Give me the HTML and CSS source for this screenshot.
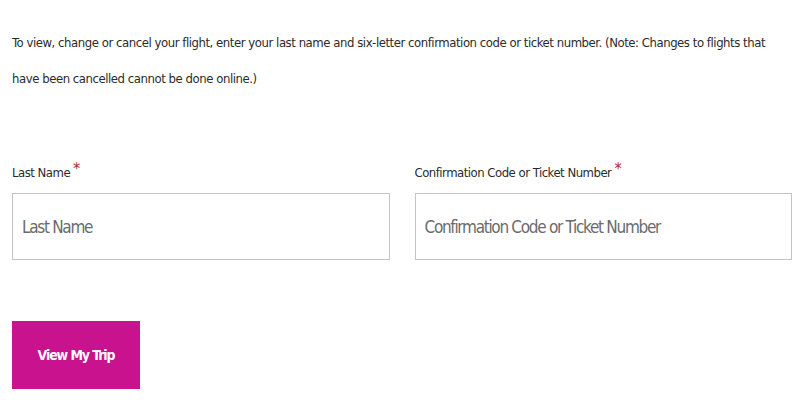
FILE: index.html
```html
<html>
<head>
    <title>View My Trip</title>
    <link rel="stylesheet" href="styles.css">
</head>
<body>
    <p class="intro">To view, change or cancel your flight, enter your last name and six-letter confirmation code or ticket number. (Note: Changes to flights that have been cancelled cannot be done online.)</p>

    <!-- trip lookup form -->
    <form class="trip-form" action="#" method="get">
        <div class="fields">
            <div class="field">
                <label for="lastName">Last Name<span class="req">*</span></label>
                <input type="text" id="lastName" name="lastName" placeholder="Last Name">
            </div>
            <div class="field">
                <label for="confCode">Confirmation Code or Ticket Number<span class="req">*</span></label>
                <input type="text" id="confCode" name="confCode" placeholder="Confirmation Code or Ticket Number">
            </div>
        </div>
        <button type="submit" class="trip-btn">View My Trip</button>
    </form>
</body>
</html>
```

FILE: styles.css
```css
body {
    margin: 0;
    padding: 25px 8px 0 12px;
    background-color: white;
    font-family: "DejaVu Sans Condensed", "Liberation Sans Narrow", "Liberation Sans", sans-serif;
    font-stretch: condensed;
    color: #2b2b2b;
}

.intro {
    margin: 0;
    font-size: 13px;
    line-height: 36px;
    letter-spacing: -0.45px;
}

.fields {
    display: flex;
    gap: 25px;
    margin-top: 62px;
}

.field {
    flex: 1;
    display: flex;
    flex-direction: column;
}

.field label {
    font-size: 13px;
    letter-spacing: -0.5px;
    margin-bottom: 13px;
}

.req {
    color: #b3262e;
    font-size: 16px;
    margin-left: 3px;
    vertical-align: 3px;
}

.field input {
    height: 67px;
    border: 1px solid #c4c4c4;
    padding: 0 9px;
    font-family: inherit;
    font-stretch: condensed;
    font-size: 17px;
    letter-spacing: -1.3px;
    color: #333;
}

.field input::placeholder {
    color: #6b6b6b;
}

.trip-btn {
    margin-top: 61px;
    width: 128px;
    height: 68px;
    background-color: #c8128e;
    color: white;
    border: none;
    font-family: inherit;
    font-stretch: condensed;
    font-weight: bold;
    font-size: 14px;
    letter-spacing: -1.1px;
    cursor: pointer;
}
```
